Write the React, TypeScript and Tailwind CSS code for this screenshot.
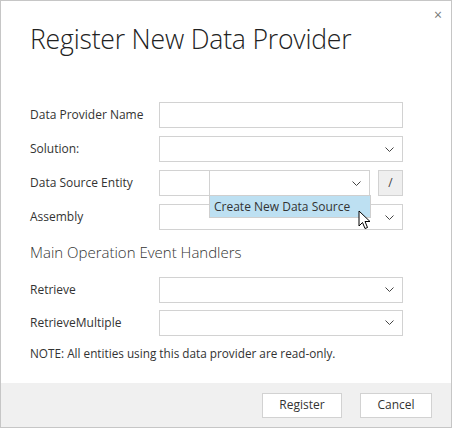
const font = { fontFamily: '"Open Sans", "Noto Sans", sans-serif' };

function Chevron() {
  return (
    <svg width="9" height="5" viewBox="0 0 9 5" className="shrink-0">
      <path d="M0.5 0.5 L4.5 4.5 L8.5 0.5" fill="none" stroke="#444" strokeWidth="1" />
    </svg>
  );
}

function Select({ className = '' }: { className?: string }) {
  return (
    <div
      className={`flex h-[26px] items-center justify-end border border-[#d2d2d2] bg-white pr-[8px] ${className}`}
    >
      <Chevron />
    </div>
  );
}

function Row({ label, children }: { label: string; children: React.ReactNode }) {
  return (
    <div className="flex items-center">
      <div className="w-[129px] text-[12px] text-[#333]">{label}</div>
      <div className="relative flex w-[244px]">{children}</div>
    </div>
  );
}

export default function App() {
  return (
    <div
      style={font}
      className="relative flex h-[428px] w-[452px] flex-col border border-[#c6c6c6] bg-white"
    >
      <button className="absolute right-[9px] top-[7px] text-[14px] leading-none text-[#777]">
        ×
      </button>

      <div className="flex flex-1 flex-col px-[29px]">
        <h1 className="mt-[20px] text-[26.6px] font-light leading-[36px] tracking-[-0.2px] text-[#222]">
          Register New Data Provider
        </h1>

        <div className="mt-[45px] flex flex-col gap-[8px]">
          <Row label="Data Provider Name">
            <div className="h-[26px] w-full border border-[#d2d2d2]" />
          </Row>
          <Row label="Solution:">
            <Select className="w-full" />
          </Row>
          <Row label="Data Source Entity">
            <div className="h-[26px] w-[51px] border border-[#d2d2d2]" />
            <Select className="-ml-px w-[162px]" />
            <div className="ml-[8px] flex h-[26px] w-[25px] items-center justify-center border border-[#d2d2d2] bg-[#efefef] text-[12px] text-[#444]">
              /
            </div>
            <div className="absolute left-[50px] top-[25px] z-10 flex h-[23px] w-[162px] items-center border border-[#cfcfcf] bg-[#bde0f2] pl-[4px] text-[12px] text-[#333]">
              Create New Data Source
            </div>
            <svg
              className="absolute left-[199px] top-[40px] z-20"
              width="14"
              height="21"
              viewBox="0 0 14 21"
            >
              <path
                d="M1 1 L1 16 L4.5 12.5 L7 18.5 L9.5 17.5 L7 11.5 L12 11.5 Z"
                fill="#fff"
                stroke="#000"
                strokeWidth="1"
                strokeLinejoin="round"
              />
            </svg>
          </Row>
          <Row label="Assembly">
            <Select className="w-full" />
          </Row>
        </div>

        <div className="mt-[11px] text-[15px] font-light text-[#333]">
          Main Operation Event Handlers
        </div>

        <div className="mt-[13px] flex flex-col gap-[7px]">
          <Row label="Retrieve">
            <Select className="w-full" />
          </Row>
          <Row label="RetrieveMultiple">
            <Select className="w-full" />
          </Row>
        </div>

        <p className="mt-[9px] text-[11.75px] text-[#333]">
          NOTE: All entities using this data provider are read-only.
        </p>
      </div>

      <div className="flex h-[44px] items-center justify-end gap-[18px] bg-[#f0f0f0] pr-[19px]">
        <button className="h-[25px] w-[80px] border border-[#d2d2d2] bg-white text-[12px] text-[#333]">
          Register
        </button>
        <button className="h-[25px] w-[72px] border border-[#d2d2d2] bg-white text-[12px] text-[#333]">
          Cancel
        </button>
      </div>
    </div>
  );
}
